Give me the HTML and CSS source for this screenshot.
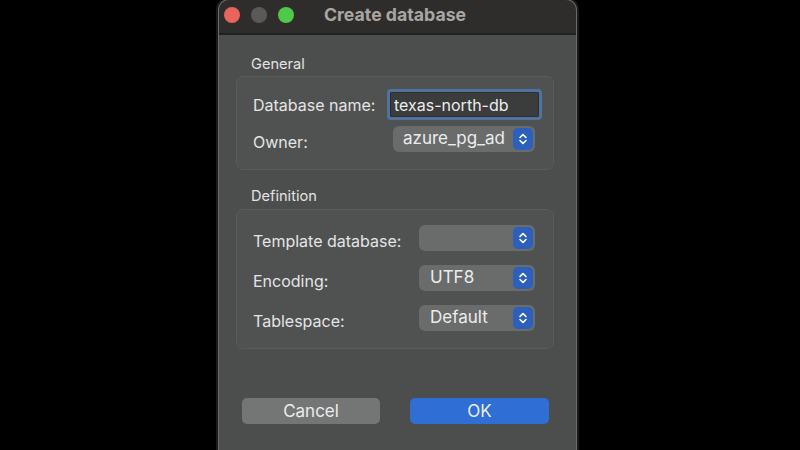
FILE: index.html
```html
<!DOCTYPE html>
<html lang="en">
<head>
    <meta charset="UTF-8">
    <meta name="viewport" content="width=device-width, initial-scale=1.0">
    <title>Create database</title>
    <link rel="stylesheet" href="styles.css">
</head>
<body>
    <div class="window">
        <div class="titlebar">
            <div class="lights">
                <span class="light red"></span>
                <span class="light grey"></span>
                <span class="light green"></span>
            </div>
            <div class="title">Create database</div>
        </div>

        <div class="content">
            <div class="section-title">General</div>
            <div class="group">
                <div class="row first">
                    <label for="dbName">Database name:</label>
                    <input type="text" id="dbName" class="text-input" value="texas-north-db">
                </div>
                <div class="row">
                    <label>Owner:</label>
                    <div class="select owner">
                        <span class="select-value">azure_pg_ad</span>
                        <span class="stepper">
                            <svg width="10" height="14" viewBox="0 0 10 14"><path d="M2 5.5 L5 2.5 L8 5.5 M2 8.5 L5 11.5 L8 8.5" fill="none" stroke="#fff" stroke-width="1.6" stroke-linecap="round" stroke-linejoin="round"/></svg>
                        </span>
                    </div>
                </div>
            </div>

            <div class="section-title second">Definition</div>
            <div class="group defs">
                <div class="row">
                    <label>Template database:</label>
                    <div class="select">
                        <span class="select-value"></span>
                        <span class="stepper">
                            <svg width="10" height="14" viewBox="0 0 10 14"><path d="M2 5.5 L5 2.5 L8 5.5 M2 8.5 L5 11.5 L8 8.5" fill="none" stroke="#fff" stroke-width="1.6" stroke-linecap="round" stroke-linejoin="round"/></svg>
                        </span>
                    </div>
                </div>
                <div class="row">
                    <label>Encoding:</label>
                    <div class="select">
                        <span class="select-value">UTF8</span>
                        <span class="stepper">
                            <svg width="10" height="14" viewBox="0 0 10 14"><path d="M2 5.5 L5 2.5 L8 5.5 M2 8.5 L5 11.5 L8 8.5" fill="none" stroke="#fff" stroke-width="1.6" stroke-linecap="round" stroke-linejoin="round"/></svg>
                        </span>
                    </div>
                </div>
                <div class="row">
                    <label>Tablespace:</label>
                    <div class="select">
                        <span class="select-value">Default</span>
                        <span class="stepper">
                            <svg width="10" height="14" viewBox="0 0 10 14"><path d="M2 5.5 L5 2.5 L8 5.5 M2 8.5 L5 11.5 L8 8.5" fill="none" stroke="#fff" stroke-width="1.6" stroke-linecap="round" stroke-linejoin="round"/></svg>
                        </span>
                    </div>
                </div>
            </div>

            <div class="buttons">
                <button type="button" class="btn cancel">Cancel</button>
                <button type="button" class="btn ok">OK</button>
            </div>
        </div>
    </div>
</body>
</html>
```

FILE: styles.css
```css
body {
    margin: 0;
    padding: 0 5px 0 0;
    height: 450px;
    overflow: hidden;
    background-color: #000;
    display: flex;
    justify-content: center;
    font-family: Inter, "Noto Sans", sans-serif;
    color: #e2e2e2;
}

.window {
    width: 357px;
    height: 470px;
    background-color: #4c4e4e;
    border-radius: 10px 10px 0 0;
    box-shadow: 0 0 0 1px #6a6a6a, 0 0 0 3px #1a1a1a;
    overflow: hidden;
}

.titlebar {
    height: 33px;
    background-color: #2f2d2c;
    border-bottom: 2px solid #222120;
    display: flex;
    align-items: center;
}

.lights {
    display: flex;
    gap: 11px;
    padding-left: 5px;
    margin-top: -4px;
}

.light {
    width: 16px;
    height: 16px;
    border-radius: 50%;
}

.red {
    background-color: #e8645c;
}

.grey {
    background-color: #5a5858;
}

.green {
    background-color: #4ec94a;
}

.title {
    margin-left: 30px;
    margin-top: -4px;
    font-size: 17.7px;
    font-weight: 700;
    color: #a8a5a3;
}

.content {
    padding: 21px 22px 0 17px;
}

.section-title {
    font-size: 14.6px;
    line-height: 17px;
    padding-left: 15px;
    margin-bottom: 3px;
}

.section-title.second {
    margin-top: 18px;
    margin-bottom: 4px;
}

.group {
    background-color: #505252;
    border: 1px solid #5a5c5c;
    border-radius: 7px;
    padding: 12px 11px 17px 16px;
}

.row {
    display: flex;
    align-items: center;
    justify-content: space-between;
    height: 26px;
    margin-top: 6px;
}

.row.first {
    height: 31px;
    margin-top: 0;
}

.row label {
    font-size: 16px;
    color: #e4e4e4;
    margin-top: 6px;
}

.row.first label {
    margin-top: 0;
}

.text-input {
    width: 149px;
    height: 25px;
    box-sizing: border-box;
    border: 1px solid #2d2e2e;
    outline: 3px solid #4f729e;
    border-radius: 1px;
    margin-right: 3px;
    background-color: #3b3c3c;
    color: #ececec;
    font-family: Inter, "Noto Sans", sans-serif;
    font-size: 16px;
    padding: 0 3px;
}

.select {
    width: 116px;
    height: 26px;
    box-sizing: border-box;
    background-color: #6a6c6c;
    border-radius: 6px;
    margin-right: 7px;
    display: flex;
    align-items: center;
    justify-content: space-between;
    padding: 0 2px 0 11px;
}

.select.owner {
    width: 142px;
    padding-left: 10px;
}

.select-value {
    font-size: 17px;
    color: #ececec;
    margin-top: -3px;
    white-space: nowrap;
    overflow: hidden;
}

.stepper {
    flex: none;
    width: 20px;
    height: 22px;
    border-radius: 5px;
    background-color: #2d5fbd;
    display: flex;
    align-items: center;
    justify-content: center;
}

.defs {
    padding: 15px 11px 17px 16px;
}

.defs .row {
    margin-top: 14px;
}

.defs .row:first-child {
    margin-top: 0;
}

.buttons {
    display: flex;
    justify-content: space-between;
    padding: 0 5px 0 6px;
    margin-top: 49px;
}

.btn {
    width: 138px;
    height: 26px;
    border: none;
    border-radius: 5px;
    font-family: Inter, "Noto Sans", sans-serif;
    font-size: 17px;
    color: #ececec;
    cursor: pointer;
}

.cancel {
    background-color: #747676;
}

.ok {
    width: 139px;
    background-color: #2f6ed5;
}
```
